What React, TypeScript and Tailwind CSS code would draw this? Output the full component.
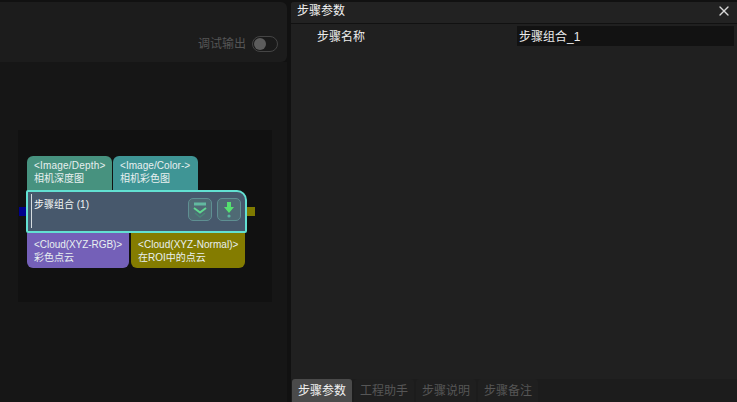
import { X } from 'lucide-react';

const font = { fontFamily: '"Liberation Sans", "Noto Sans CJK SC", sans-serif' };

const Port = ({ className, titleClass, title, sub }: { className: string; titleClass: string; title: string; sub: string }) => (
  <div className={`absolute pl-[7px] text-[10px] leading-[13px] text-[#e8f0f0] ${className}`}>
    <div className={`whitespace-nowrap ${titleClass}`}>{title}</div>
    <div className="whitespace-nowrap">{sub}</div>
  </div>
);

const StepNode = () => (
  <div className="absolute left-[26px] top-[190px] h-[43px] w-[221px] rounded-tr-[10px] rounded-tl-[2px] rounded-b-[2px] border-2 border-[#62e0d2] bg-[#47586c]">
    <div className="absolute left-[3px] top-[2px] h-[34px] w-px bg-[#d5dce0]" />
    <div className="absolute left-[6px] top-[6px] text-[10px] leading-[14px] text-[#f0f4f4]">步骤组合 (1)</div>
    <div className="absolute left-[160px] top-[6px] flex h-[23px] w-[24px] items-center justify-center rounded-[5px] border border-[#5f8f92] bg-[#4f6a74]">
      <svg width="16" height="18" viewBox="0 0 16 18" fill="none">
        <rect x="2" y="1.5" width="12" height="3" fill="#62b8a0" />
        <path d="M2 7 8 11.5 14 7" stroke="#5fd890" strokeWidth="2" />
        <path d="M3 12 8 16l5-4" stroke="#4a8478" strokeWidth="1.6" />
      </svg>
    </div>
    <div className="absolute left-[189px] top-[6px] flex h-[23px] w-[24px] items-center justify-center rounded-[5px] border border-[#5f8f92] bg-[#4f6a74]">
      <svg width="12" height="18" viewBox="0 0 12 18" fill="#55e070">
        <path d="M4 1h4v5h3l-5 6-5-6h3z" />
        <circle cx="6" cy="15" r="1.6" fill="#5cb8a0" />
      </svg>
    </div>
  </div>
);

const Canvas = () => (
  <div className="relative flex-1 bg-[#161616]">
    <div className="absolute left-[18px] top-[68px] h-[172px] w-[254px] bg-[#111111]" />
  </div>
);

const Tab = ({ label, active }: { label: string; active?: boolean }) => (
  <div className={`flex h-[23px] w-[60px] items-center justify-center rounded-t-[3px] pt-px text-[12px] ${active ? 'bg-[#4a4a4a] text-[#f2f2f2]' : 'bg-[#1f1f1f] text-[#565656]'}`}>
    {label}
  </div>
);

export default function App() {
  return (
    <div className="relative flex h-[402px] w-[737px] overflow-hidden bg-[#111111]" style={font}>
      {/* left side */}
      <div className="mt-[2px] flex w-[287px] flex-col">
        <div className="flex h-[60px] items-end justify-end gap-[6px] rounded-r-[6px] bg-[#1c1c1c] pb-[10px] pr-[9px]">
          <span className="text-[12px] leading-[16px] text-[#555555]">调试输出</span>
          <div className="flex h-[16px] w-[26px] items-center rounded-full border border-[#454545] bg-[#1a1a1a] pl-[1px]">
            <div className="h-[12px] w-[12px] rounded-full bg-[#5c5c5c]" />
          </div>
        </div>
        <Canvas />
      </div>

      {/* nodes */}
      <Port className="left-[27px] top-[156px] h-[36px] w-[85px] rounded-t-[6px] bg-[#47927f] pt-[3px]" titleClass="tracking-[0.2px]" title="<Image/Depth>" sub="相机深度图" />
      <Port className="left-[113px] top-[156px] h-[36px] w-[85px] rounded-t-[6px] bg-[#3f9595] pt-[3px]" titleClass="tracking-[0.05px]" title="<Image/Color->" sub="相机彩色图" />
      <Port className="left-[27px] top-[233px] h-[35px] w-[102px] rounded-b-[6px] bg-[#7460b8] pt-[5px]" titleClass="tracking-[-0.05px]" title="<Cloud(XYZ-RGB)>" sub="彩色点云" />
      <Port className="left-[131px] top-[233px] h-[35px] w-[114px] rounded-b-[6px] bg-[#847c00] pt-[5px]" titleClass="tracking-[0.05px]" title="<Cloud(XYZ-Normal)>" sub="在ROI中的点云" />
      <div className="absolute left-[19px] top-[207px] h-[9px] w-[8px] bg-[#00008b]" />
      <div className="absolute left-[246px] top-[207px] h-[9px] w-[9px] bg-[#7f7a00]" />
      <StepNode />

      {/* right panel */}
      <div className="ml-[4px] mt-[2px] flex flex-1 flex-col rounded-tl-[3px] bg-[#202020]">
        <div className="flex h-[22px] items-center justify-between rounded-tl-[3px] border-b border-[#111111] bg-[#222222] pb-[3px] pl-[6px] pr-[5px] text-[12px] text-[#f2f2f2]">
          <span>步骤参数</span>
          <X size={16} strokeWidth={2} color="#d8d8d8" />
        </div>
        <div className="mt-[2px] flex h-[20px] items-center text-[12px] text-[#ececec]">
          <span className="ml-[26px] w-[200px] pt-px">步骤名称</span>
          <div className="flex h-[20px] w-[217px] items-center bg-[#121212] pl-[2px] pt-px">步骤组合_1</div>
        </div>
        <div className="flex-1" />
        <div className="flex h-[23px] bg-[#1c1c1c] pl-[1px]">
          <Tab label="步骤参数" active />
          <div className="w-[2px]" />
          <Tab label="工程助手" />
          <div className="w-[2px]" />
          <Tab label="步骤说明" />
          <div className="w-[2px]" />
          <Tab label="步骤备注" />
        </div>
      </div>
    </div>
  );
}
